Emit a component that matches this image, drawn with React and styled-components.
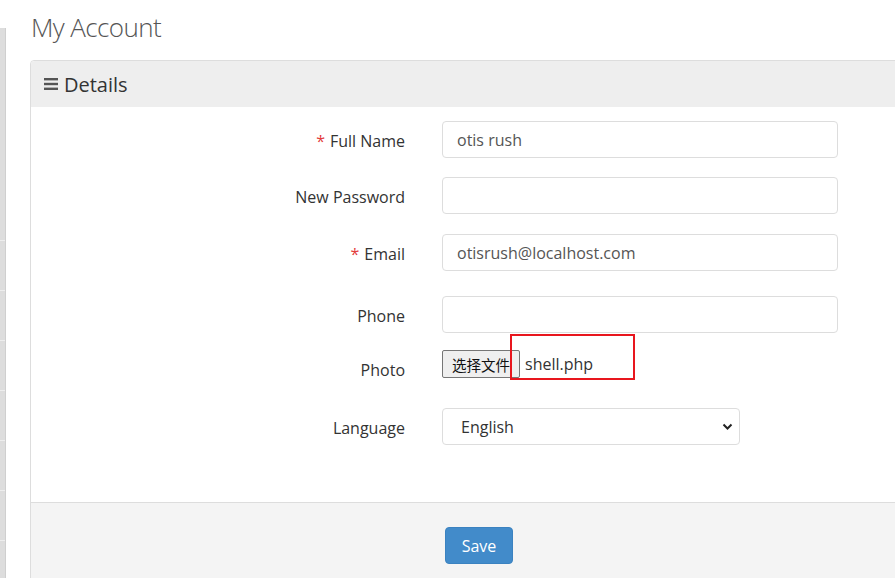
import React from "react";
import styled, { createGlobalStyle } from "styled-components";

const GlobalStyle = createGlobalStyle`
  html, body {
    margin: 0;
    padding: 0;
    background: #ffffff;
    overflow: hidden;
  }
  body {
    font-family: "Open Sans", "Noto Sans", "Noto Sans CJK SC", sans-serif;
    color: #333333;
  }
`;

const fields = [
  { label: "Full Name", required: true, value: "otis rush", top: 14 },
  { label: "New Password", value: "", top: 19 },
  { label: "Email", required: true, value: "otisrush@localhost.com", top: 20 },
  { label: "Phone", value: "", top: 25 },
];

const MenuIcon = () => (
  <svg width="14" height="12" viewBox="0 0 14 12">
    <rect x="0" y="0" width="14" height="2.4" fill="#555" />
    <rect x="0" y="4.8" width="14" height="2.4" fill="#555" />
    <rect x="0" y="9.6" width="14" height="2.4" fill="#555" />
  </svg>
);

const Chevron = () => (
  <svg width="11" height="8" viewBox="0 0 11 8">
    <path d="M1.5 1.5 L5.5 5.5 L9.5 1.5" fill="none" stroke="#222" strokeWidth="2" />
  </svg>
);

const App = () => {
  return (
    <React.Fragment>
      <GlobalStyle />
      <Page>
        <Sidebar>
          <SideItem size={213} />
          {[0, 1, 2, 3, 4, 5, 6].map((i) => (
            <SideItem key={i} size={50} />
          ))}
        </Sidebar>
        <Main>
          <Title>My Account</Title>
          <Card>
            <CardHeader>
              <MenuIcon />
              <HeaderText>Details</HeaderText>
            </CardHeader>
            <CardBody>
              {fields.map((f) => (
                <Row key={f.label} top={f.top}>
                  <Label>
                    {f.required && <Star>*</Star>}
                    {f.label}
                  </Label>
                  <Input defaultValue={f.value} />
                </Row>
              ))}
              <Row top={17}>
                <Label>Photo</Label>
                <FileField>
                  <FileButton>选择文件</FileButton>
                  <FileName>shell.php</FileName>
                  <Highlight />
                </FileField>
              </Row>
              <Row top={27}>
                <Label>Language</Label>
                <SelectWrap>
                  <Select defaultValue="en">
                    <option value="en">English</option>
                  </Select>
                  <ArrowBox>
                    <Chevron />
                  </ArrowBox>
                </SelectWrap>
              </Row>
            </CardBody>
            <CardFooter>
              <SaveButton>Save</SaveButton>
            </CardFooter>
          </Card>
        </Main>
      </Page>
    </React.Fragment>
  );
};

const Page = styled.div`
  display: flex;
  width: 895px;
  height: 578px;
  overflow: hidden;
`;

const Sidebar = styled.div`
  width: 6px;
  flex-shrink: 0;
  margin-top: 28px;
  display: flex;
  flex-direction: column;
  background: #dddddd;
  border-right: 1px solid #cfcfcf;
  box-sizing: border-box;
`;

const SideItem = styled.div`
  height: ${(props) => props.size}px;
  flex-shrink: 0;
  border-bottom: 1px solid #eeeeee;
  box-sizing: border-box;
`;

const Main = styled.div`
  flex: 1;
  padding-left: 24px;
  min-width: 0;
`;

const Title = styled.h1`
  margin: 9px 0 15px 1px;
  font-size: 26px;
  line-height: 36px;
  font-weight: 300;
  color: #555555;
  letter-spacing: -0.6px;
`;

const Card = styled.div`
  width: 920px;
  border: 1px solid #dddddd;
  border-radius: 4px 0 0 0;
  background: #ffffff;
`;

const CardHeader = styled.div`
  height: 46px;
  display: flex;
  align-items: center;
  gap: 6px;
  padding-left: 13px;
  background: #eeeeee;
  border-radius: 4px 0 0 0;
`;

const HeaderText = styled.span`
  font-size: 20px;
  color: #333333;
`;

const CardBody = styled.div`
  padding-bottom: 57px;
`;

const Row = styled.div`
  display: grid;
  grid-template-columns: 374px 396px;
  column-gap: 37px;
  align-items: start;
  margin-top: ${(props) => props.top}px;
`;

const Label = styled.label`
  text-align: right;
  font-size: 16px;
  line-height: 22px;
  padding-top: 9px;
  color: #333333;
`;

const Star = styled.span`
  color: #e33b3b;
  margin-right: 5px;
`;

const Input = styled.input`
  height: 37px;
  box-sizing: border-box;
  border: 1px solid #dddddd;
  border-radius: 4px;
  padding: 0 14px;
  font-family: "Open Sans", sans-serif;
  font-size: 16px;
  color: #555555;
  outline: none;
`;

const FileField = styled.div`
  position: relative;
  display: flex;
  align-items: center;
  height: 28px;
`;

const FileButton = styled.button`
  height: 28px;
  width: 78px;
  box-sizing: border-box;
  padding: 0;
  border: 1px solid #767676;
  border-radius: 2px;
  background: #efefef;
  font-family: "Noto Sans CJK SC", sans-serif;
  font-size: 14.5px;
  color: #111111;
`;

const FileName = styled.span`
  margin-left: 5px;
  font-size: 16px;
  color: #333333;
`;

const Highlight = styled.div`
  position: absolute;
  left: 68px;
  top: -16px;
  width: 125px;
  height: 46px;
  border: 2px solid #e8161e;
  box-sizing: border-box;
`;

const SelectWrap = styled.div`
  position: relative;
  width: 298px;
`;

const Select = styled.select`
  width: 100%;
  height: 37px;
  box-sizing: border-box;
  appearance: none;
  border: 1px solid #dddddd;
  border-radius: 4px;
  padding: 0 18px;
  background: #ffffff;
  font-family: "Open Sans", sans-serif;
  font-size: 16px;
  color: #333333;
`;

const ArrowBox = styled.span`
  position: absolute;
  right: 7px;
  top: 15px;
  display: flex;
  pointer-events: none;
`;

const CardFooter = styled.div`
  background: #f4f4f4;
  border-top: 1px solid #dddddd;
  padding: 24px 0 40px 414px;
`;

const SaveButton = styled.button`
  width: 68px;
  height: 37px;
  border: 1px solid #3b82c0;
  border-radius: 4px;
  background: #428bca;
  color: #ffffff;
  font-family: "Open Sans", sans-serif;
  font-size: 16px;
`;

export default App;
